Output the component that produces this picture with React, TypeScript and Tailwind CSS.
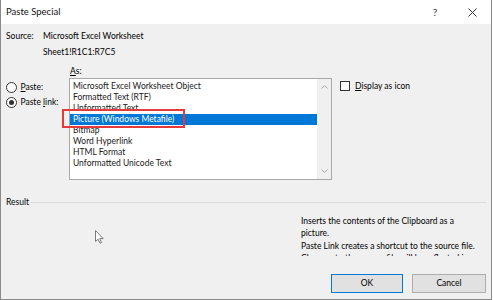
import React from 'react';

const items = [
  'Microsoft Excel Worksheet Object',
  'Formatted Text (RTF)',
  'Unformatted Text',
  'Picture (Windows Metafile)',
  'Bitmap',
  'Word Hyperlink',
  'HTML Format',
  'Unformatted Unicode Text',
];

function Radio({ checked }: { checked?: boolean }) {
  return (
    <span className="w-[11px] h-[11px] rounded-full border border-[#333] bg-white flex items-center justify-center shrink-0">
      {checked && <span className="w-[5px] h-[5px] rounded-full bg-[#333]" />}
    </span>
  );
}

export default function App() {
  return (
    <div className="w-[493px] h-[300px] bg-white">
      <div className="relative w-[492px] h-[300px] bg-[#f0f0f0] border-l border-r border-b border-[#8a8a8a] overflow-hidden text-black font-['Lato',sans-serif] text-[8.5px]">
        {/* title bar */}
        <div className="h-[24px] bg-white flex items-center pl-[5px] pr-[14px]">
          <span className="text-[9.5px] text-[#111]">Paste Special</span>
          <span className="ml-auto w-[10px] text-center text-[10px] text-[#333]">?</span>
          <svg className="ml-[28px]" width="9" height="9" viewBox="0 0 9 9">
            <path d="M0.5 0.5 L8.5 8.5 M8.5 0.5 L0.5 8.5" stroke="#333" strokeWidth="1" />
          </svg>
        </div>

        {/* source */}
        <div className="pt-[4px] pl-[5px] leading-[16px]">
          <div className="flex">
            <span className="w-[37px]">Source:</span>
            <span>Microsoft Excel Worksheet</span>
          </div>
          <div className="pl-[37px]">Sheet1!R1C1:R7C5</div>
        </div>

        {/* main */}
        <div className="mt-[5px] h-[115px] flex">
          <div className="w-[68px] pl-[5px] pt-[15px]">
            <div className="h-[15px] flex items-center gap-[3.5px]">
              <Radio />
              <span><span className="underline">P</span>aste:</span>
            </div>
            <div className="h-[15px] flex items-center gap-[3.5px]">
              <Radio checked />
              <span>Paste <span className="underline">l</span>ink:</span>
            </div>
          </div>

          <div className="w-[263px] flex flex-col">
            <div className="h-[13px] leading-[13px] pl-[1px]">
              <span className="underline">A</span>s:
            </div>
            <div className="h-[102px] border border-[#a8a8a8] bg-white flex">
              <div className="flex-1 pt-[1.5px]">
                {items.map((t, i) => (
                  <div
                    key={t}
                    className={
                      i === 3
                        ? 'h-[11px] leading-[11px] pl-[3px] bg-[#0078d7] text-white'
                        : 'h-[11px] leading-[11px] pl-[3px] text-[#1a1a1a]'
                    }
                  >
                    {t}
                  </div>
                ))}
              </div>
              <div className="w-[14px] bg-[#f0f0f0] flex flex-col justify-between items-center py-[6px]">
                <svg width="7" height="4" viewBox="0 0 7 4">
                  <path d="M0.5 3.5 L3.5 0.5 L6.5 3.5" fill="none" stroke="#a6a6a6" strokeWidth="1" />
                </svg>
                <svg width="7" height="4" viewBox="0 0 7 4">
                  <path d="M0.5 0.5 L3.5 3.5 L6.5 0.5" fill="none" stroke="#a6a6a6" strokeWidth="1" />
                </svg>
              </div>
            </div>
          </div>

          <div className="pl-[8px] pt-[16px]">
            <div className="flex items-center gap-[5px] h-[10px]">
              <span className="w-[10px] h-[10px] border border-[#333] bg-white shrink-0" />
              <span><span className="underline">D</span>isplay as icon</span>
            </div>
          </div>
        </div>

        {/* result */}
        <div className="mt-[16px] h-[12px] flex items-center pl-[5px] pr-[4px]">
          <span>Result</span>
          <span className="flex-1 h-px bg-[#dcdcdc] ml-[1px]" />
        </div>
        <div className="mt-[7px] h-[41px] overflow-hidden pl-[300px] leading-[12px]">
          <div>Inserts the contents of the Clipboard as a</div>
          <div>picture.</div>
          <div className="mt-[0.5px]">Paste Link creates a shortcut to the source file.</div>
          <div>Changes to the source file will be reflected in your document.</div>
        </div>

        {/* buttons */}
        <div className="mt-[18px] flex justify-end gap-[9px] pr-[5px]">
          <div className="w-[72px] h-[19px] border border-[#0078d7] bg-[#e1e1e1] flex items-center justify-center">
            OK
          </div>
          <div className="w-[74px] h-[19px] border border-[#adadad] bg-[#e1e1e1] flex items-center justify-center">
            Cancel
          </div>
        </div>

        {/* annotation box */}
        <div className="absolute left-[61px] top-[109px] w-[123px] h-[19px] border-2 border-[#e5393a]" />

        {/* mouse pointer */}
        <svg className="absolute left-[94px] top-[230px]" width="10" height="14" viewBox="0 0 10 14">
          <path d="M0.5 0.5 L0.5 11.5 L3 9.2 L5 13.2 L6.6 12.5 L4.7 8.6 L8.2 8.6 Z" fill="#fff" stroke="#7a7a7a" strokeWidth="1" strokeLinejoin="round" />
        </svg>
      </div>
    </div>
  );
}
